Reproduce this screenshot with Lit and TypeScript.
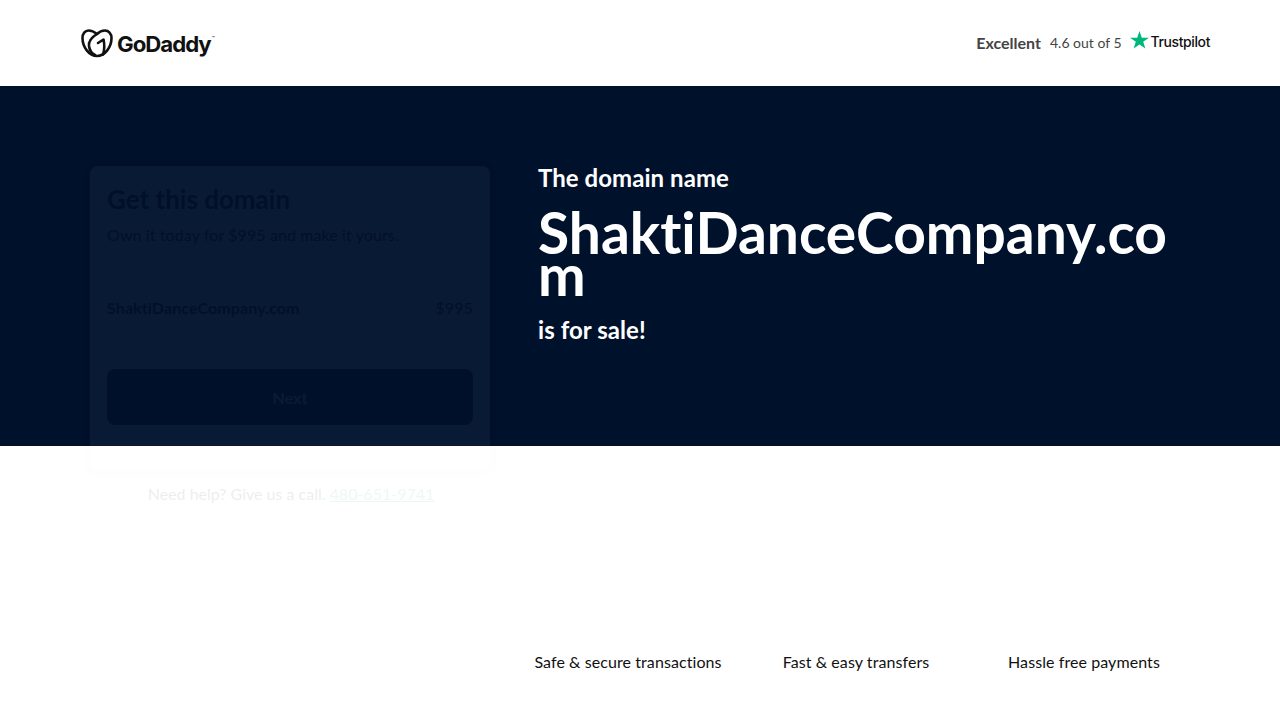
import { LitElement, html, css } from 'lit';
import { customElement } from 'lit/decorators.js';

const FEATURES = ['Safe & secure transactions', 'Fast & easy transfers', 'Hassle free payments'];

@customElement('app-root')
export class AppRoot extends LitElement {
  static override styles = css`
    :host {
      display: block;
      min-height: 720px;
      background: #fff;
      font-family: Lato, 'Liberation Sans', sans-serif;
      font-variant-ligatures: none;
      color: #111;
      overflow: hidden;
    }

    .top {
      height: 86px;
      box-sizing: border-box;
      padding: 0 70px 0 81px;
      display: flex;
      align-items: center;
      justify-content: space-between;
    }

    .logo {
      display: flex;
      align-items: center;
      gap: 4px;
    }

    .logo svg {
      display: block;
    }

    .logo-text {
      font-family: Inter, sans-serif;
      font-size: 22.2px;
      font-weight: 700;
      letter-spacing: -1px;
      color: #111;
    }

    .logo-text sup {
      font-size: 5px;
      font-weight: 400;
      letter-spacing: 0;
      vertical-align: 12px;
      line-height: 0;
      margin-left: 1px;
    }

    .rating {
      display: flex;
      align-items: center;
      margin-top: -2px;
      color: #444;
      font-size: 14px;
    }

    .rating b {
      font-size: 16px;
      font-weight: 700;
      margin-right: 9px;
    }

    .rating .tp {
      display: flex;
      align-items: center;
      gap: 2px;
      margin-left: 8px;
      margin-top: -4px;
      color: #111;
      font-family: Inter, sans-serif;
      font-size: 14px;
      font-weight: 500;
      letter-spacing: -0.4px;
    }

    .rating .tp span {
      padding-top: 2px;
    }

    .hero {
      height: 360px;
      box-sizing: border-box;
      background: #00112c;
      padding: 80px 90px 0 90px;
      display: flex;
      gap: 48px;
    }

    .card {
      flex: 0 0 400px;
      height: 304px;
      box-sizing: border-box;
      padding: 17px;
      border-radius: 8px;
      background: #fff;
      box-shadow: 0 1px 6px rgba(0, 0, 0, 0.22);
      opacity: 0.035;
      color: #000;
    }

    .card h2 {
      margin: 0;
      font-size: 26px;
      line-height: 32px;
      font-weight: 700;
    }

    .card p {
      margin: 8px 0 0;
      font-size: 16px;
      line-height: 24px;
      letter-spacing: 0.1px;
    }

    .line {
      display: flex;
      justify-content: space-between;
      margin-top: 49px;
      font-size: 16px;
      line-height: 24px;
      font-weight: 700;
      letter-spacing: 0.1px;
    }

    .line .price {
      font-weight: 400;
    }

    .next {
      margin-top: 49px;
      height: 56px;
      border-radius: 8px;
      background: #000;
      color: #fff;
      display: flex;
      align-items: center;
      justify-content: center;
      font-weight: 700;
      font-size: 16px;
    }

    .help {
      position: absolute;
      left: 91px;
      top: 482px;
      width: 400px;
      text-align: center;
      font-size: 16px;
      line-height: 24px;
      opacity: 0.07;
      color: #111;
    }

    .help a {
      color: #00a4a6;
    }

    .pitch {
      flex: 1;
      min-width: 0;
      color: #fff;
    }

    .pitch .lead {
      font-size: 24px;
      line-height: 24px;
      font-weight: 700;
      letter-spacing: 0.05px;
    }

    .pitch h1 {
      margin: 21px 0 0;
      font-size: 56.9px;
      line-height: 42px;
      font-weight: 700;
      word-break: break-all;
    }

    .pitch .lead.sale {
      margin-top: 23px;
    }

    .features {
      display: grid;
      grid-template-columns: repeat(3, 228px);
      margin: 206px 0 0 514px;
      font-size: 16px;
      line-height: 20px;
      text-align: center;
      letter-spacing: 0.08px;
    }
  `;

  override render() {
    return html`
      <header class="top">
        <div class="logo">
          <svg width="32" height="29" viewBox="0 0 32 29" fill="none" stroke="#111" stroke-width="2.600" stroke-linecap="round" stroke-linejoin="round">
            <path d="M16 5C13 2.500 10 1.500 7.500 1.500C4 1.500 1.500 4.500 1.500 9C1.500 18 8 27 16 27C24 27 30.500 18 30.500 9C30.500 4.500 27.500 1.500 24 1.500C21.500 1.500 18.500 2.500 16 5Z" />
            <path d="M16 5C11 8 7.500 12 8 17C8.500 21 11 24.500 14 26" />
            <path d="M17 14L22.500 10.500C23.500 15 23.500 21 22 25.500" />
          </svg>
          <span class="logo-text">GoDaddy<sup>™</sup></span>
        </div>
        <div class="rating">
          <b>Excellent</b>
          <span>4.6 out of 5</span>
          <span class="tp">
            <svg width="19" height="18" viewBox="0 0 20 19"><path fill="#00b67a" d="M10 0l2.400 7H20l-6.100 4.400 2.300 7.200L10 14.200l-6.200 4.400 2.300-7.200L0 7h7.600z" /></svg>
            <span>Trustpilot</span>
          </span>
        </div>
      </header>
      <section class="hero">
        <div class="card">
          <h2>Get this domain</h2>
          <p>Own it today for $995 and make it yours.</p>
          <div class="line"><span>ShaktiDanceCompany.com</span><span class="price">$995</span></div>
          <div class="next">Next</div>
        </div>
        <div class="pitch">
          <div class="lead">The domain name</div>
          <h1>ShaktiDanceCompany.com</h1>
          <div class="lead sale">is for sale!</div>
        </div>
      </section>
      <div class="help">Need help? Give us a call. <a href="#">480-651-9741</a></div>
      <div class="features">
        ${FEATURES.map((f) => html`<span>${f}</span>`)}
      </div>
    `;
  }
}
